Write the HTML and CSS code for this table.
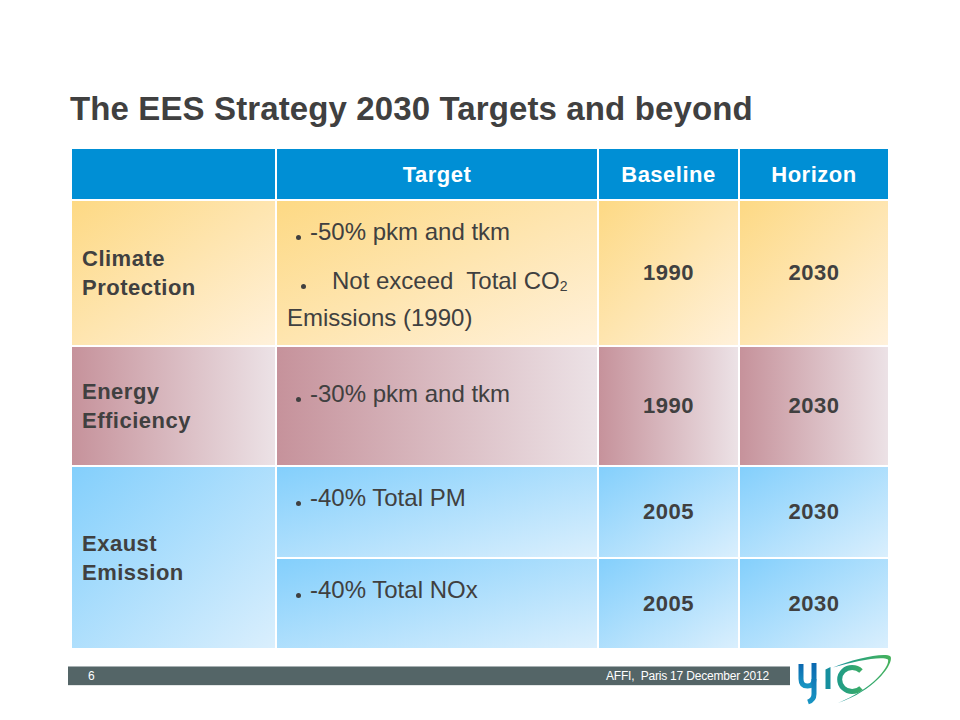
FILE: index.html
```html
<!DOCTYPE html>
<html lang="en">
<head>
<meta charset="utf-8">
<title>The EES Strategy 2030 Targets and beyond</title>
<link rel="stylesheet" href="styles.css">
</head>
<body>
<div class="slide">
  <h1 class="title">The EES Strategy 2030 Targets and beyond</h1>

  <div class="ees-table">
    <div class="cell head"></div>
    <div class="cell head center">Target</div>
    <div class="cell head center">Baseline</div>
    <div class="cell head center">Horizon</div>

    <div class="cell label yellow">Climate<br>Protection</div>
    <div class="cell targets yellow">
      <p class="item"><span class="dot"></span>-50% pkm and tkm</p>
      <p class="item item-gap"><span class="dot dot-wide"></span>Not exceed&nbsp; Total CO<sub class="sub">2</sub><br>Emissions (1990)</p>
    </div>
    <div class="cell num center yellow">1990</div>
    <div class="cell num center yellow">2030</div>

    <div class="cell label pink">Energy<br>Efficiency</div>
    <div class="cell targets targets-low pink">
      <p class="item"><span class="dot"></span>-30% pkm and tkm</p>
    </div>
    <div class="cell num center pink">1990</div>
    <div class="cell num center pink">2030</div>

    <div class="cell label blue span2">Exaust<br>Emission</div>
    <div class="cell targets blue">
      <p class="item"><span class="dot"></span>-40% Total PM</p>
    </div>
    <div class="cell num center blue">2005</div>
    <div class="cell num center blue">2030</div>

    <div class="cell targets blue">
      <p class="item"><span class="dot"></span>-40% Total NOx</p>
    </div>
    <div class="cell num center blue">2005</div>
    <div class="cell num center blue">2030</div>
  </div>

  <div class="footer">
    <div class="footer-bar">
      <span class="page-no">6</span>
      <span class="event">AFFI,&nbsp; Paris 17 December 2012</span>
    </div>
    <svg class="logo" width="100" height="56" viewBox="0 0 100 56" aria-label="UIC">
      <defs>
        <linearGradient id="uicGrad" x1="0" y1="0" x2="1" y2="0">
          <stop offset="0" stop-color="#1a8fa8"/>
          <stop offset="0.4" stop-color="#2aa37c"/>
          <stop offset="1" stop-color="#46b25c"/>
        </linearGradient>
        <linearGradient id="uGrad" x1="0" y1="0" x2="0" y2="1">
          <stop offset="0" stop-color="#0b68b0"/>
          <stop offset="1" stop-color="#1894c2"/>
        </linearGradient>
        <linearGradient id="cGrad" x1="0" y1="0" x2="1" y2="0">
          <stop offset="0" stop-color="#219c86"/>
          <stop offset="1" stop-color="#3aac68"/>
        </linearGradient>
      </defs>
      <path d="M8 13 V28 Q8 35 14.5 35 Q21 35 21 28" fill="none" stroke="url(#uGrad)" stroke-width="5"/>
      <path d="M21 12 V43 Q21 49 15 51" fill="none" stroke="url(#uGrad)" stroke-width="5"/>
      <path d="M32.5 18.5 L37.5 16 V38 H32.5 Z" fill="#168f9e"/>
      <path d="M68 20 A12.5 12 0 1 0 68 37" fill="none" stroke="url(#cGrad)" stroke-width="5"/>
      <path d="M40 16.5 C60 8 92 1 97.5 5.5 C101 11 85 38 45 52 C81 37 97 15 95 8.5 C89 4.5 62 10 40 16.5 Z" fill="url(#uicGrad)"/>
    </svg>
  </div>
</div>
</body>
</html>
```

FILE: styles.css
```css
html, body {
  margin: 0;
  padding: 0;
  background: #ffffff;
}

body {
  font-family: "Liberation Sans", Arial, sans-serif;
  color: #404040;
}

.slide {
  width: 960px;
  height: 720px;
  position: relative;
  overflow: hidden;
}

.title {
  margin: 0;
  padding: 90px 0 0 70px;
  font-size: 33px;
  line-height: 38px;
  font-weight: bold;
  letter-spacing: 0.12px;
  color: #404040;
  height: 38px;
}

.ees-table {
  margin: 21px 0 0 72px;
  width: 816px;
  display: grid;
  grid-template-columns: 203px 320px 139px 148px;
  grid-template-rows: 50px 144px 118px 90px 89px;
  gap: 2px;
  background: #ffffff;
}

.cell {
  box-sizing: border-box;
  min-width: 0;
}

.center {
  display: flex;
  align-items: center;
  justify-content: center;
}

.head {
  background: #008fd5;
  color: #ffffff;
  font-size: 22px;
  font-weight: bold;
  letter-spacing: 0.5px;
  padding-top: 2px;
}

.yellow {
  background: linear-gradient(to bottom right, #fdd984, #fff1db);
}

.pink {
  background: linear-gradient(to right, #c6929b, #ece2e6);
}

.blue {
  background: linear-gradient(to bottom right, #83cffc, #daeffd);
}

.label {
  display: flex;
  align-items: center;
  padding-left: 10px;
  font-size: 22px;
  line-height: 29px;
  font-weight: bold;
  letter-spacing: 0.5px;
  color: #404040;
}

.span2 {
  grid-row: 4 / span 2;
}

.num {
  font-size: 22px;
  font-weight: bold;
  letter-spacing: 0.5px;
  color: #404040;
}

.targets {
  padding: 14px 4px 0 10px;
  font-size: 24px;
  line-height: 34px;
  color: #404040;
}

.targets-low {
  padding-top: 30px;
}

.item {
  margin: 0;
  white-space: nowrap;
}

.item-gap {
  margin-top: 15px;
}

.dot {
  display: inline-block;
  width: 5px;
  height: 5px;
  border-radius: 50%;
  background: #404040;
  margin: 0 9px 0 9px;
  vertical-align: baseline;
}

.dot-wide {
  margin: 0 26px 0 14px;
}

.sub {
  font-size: 14px;
  vertical-align: baseline;
  position: relative;
  top: 2px;
}

.footer {
  display: flex;
  align-items: flex-start;
  margin: 3px 0 0 68px;
}

.footer-bar {
  box-sizing: border-box;
  width: 722px;
  height: 20px;
  margin-top: 15px;
  background: #546567;
  border-top: 1px solid #a7b0b2;
  border-bottom: 1px solid #e3e6e6;
  display: flex;
  align-items: center;
  justify-content: space-between;
  padding: 0 21px 0 20px;
  color: #ffffff;
  font-size: 12px;
  letter-spacing: -0.2px;
}

.logo {
  display: block;
  margin-left: 3px;
}
```
